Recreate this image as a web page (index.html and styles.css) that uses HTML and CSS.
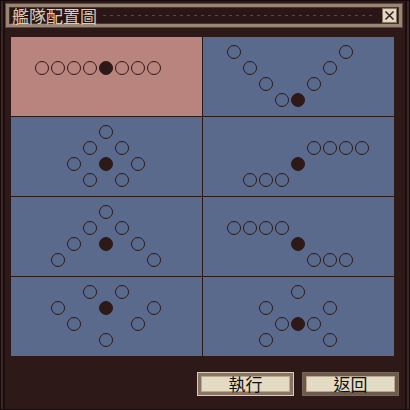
FILE: index.html
```html
<!DOCTYPE html>
<html lang="zh-Hant">
<head>
    <meta charset="UTF-8">
    <meta name="viewport" content="width=device-width, initial-scale=1.0">
    <title>艦隊配置圖</title>
    <link rel="stylesheet" href="styles.css">
</head>
<body>
    <div class="window">
        <div class="title-bar">
            <span class="title">艦隊配置圖</span>
            <span class="title-line"></span>
            <button class="close-btn">
                <svg width="13" height="13" viewBox="0 0 13 13">
                    <path d="M2.5 2.5 L10.5 10.5 M10.5 2.5 L2.5 10.5" stroke="#3a2420" stroke-width="1.6" fill="none"/>
                </svg>
            </button>
        </div>

        <div class="board" id="board">
            <!-- Formation cells are generated below -->
        </div>

        <div class="actions">
            <button class="btn btn-ok">執行</button>
            <button class="btn btn-back">返回</button>
        </div>
    </div>

    <script>
        // Each formation: flagship [col,row] and escort positions on a 9x4 grid
        const formations = [
            { flag: [4, 1], ships: [[0,1],[1,1],[2,1],[3,1],[5,1],[6,1],[7,1]] },
            { flag: [4, 3], ships: [[0,0],[1,1],[2,2],[3,3],[5,2],[6,1],[7,0]] },
            { flag: [4, 2], ships: [[4,0],[3,1],[5,1],[2,2],[6,2],[3,3],[5,3]] },
            { flag: [4, 2], ships: [[5,1],[6,1],[7,1],[8,1],[1,3],[2,3],[3,3]] },
            { flag: [4, 2], ships: [[4,0],[3,1],[5,1],[2,2],[6,2],[1,3],[7,3]] },
            { flag: [4, 2], ships: [[0,1],[1,1],[2,1],[3,1],[5,3],[6,3],[7,3]] },
            { flag: [4, 1], ships: [[3,0],[5,0],[1,1],[7,1],[2,2],[6,2],[4,3]] },
            { flag: [4, 2], ships: [[4,0],[2,1],[6,1],[3,2],[5,2],[2,3],[6,3]] }
        ];

        function dot(pos, filled) {
            return `<span class="dot${filled ? ' flagship' : ''}" style="grid-column:${pos[0] + 1};grid-row:${pos[1] + 1}"></span>`;
        }

        function renderBoard() {
            const board = document.getElementById('board');
            let html = '';
            formations.forEach((f, i) => {
                let dots = f.ships.map(p => dot(p, false)).join('');
                dots += dot(f.flag, true);
                html += `<div class="cell${i === 0 ? ' selected' : ''}"><div class="dots">${dots}</div></div>`;
            });
            board.innerHTML = html;
        }

        renderBoard();
    </script>
</body>
</html>
```

FILE: styles.css
```css
* {
    margin: 0;
    padding: 0;
    box-sizing: border-box;
}

body {
    background-color: #2e1919;
    font-family: "Noto Sans CJK TC", "Noto Sans CJK SC", sans-serif;
}

.window {
    width: 410px;
    height: 410px;
    background-color: #2e1919;
    border: 1px solid #170b0b;
    box-shadow: inset 2px 0 0 #3d2626, inset 4px 0 0 #1c0e0e, inset -2px 0 0 #3d2626, inset -4px 0 0 #1c0e0e;
    padding-top: 3px;
}

.title-bar {
    display: flex;
    align-items: center;
    height: 23px;
    margin: 0 7px 0 5px;
    padding: 0 2px 0 3px;
    border: 3px solid #9a8674;
    box-shadow: inset 0 0 0 1px #4a3630, 0 0 0 1px #5b463c;
    background-color: #2a1616;
}

.title {
    color: #ddcbb6;
    font-size: 17px;
    line-height: 17px;
}

.title-line {
    flex: 1;
    height: 1px;
    margin: 0 6px;
    background: repeating-linear-gradient(90deg, #5c4844 0 3px, transparent 3px 7px);
}

.close-btn {
    display: flex;
    align-items: center;
    justify-content: center;
    width: 15px;
    height: 15px;
    background-color: #e2d8c4;
    border: 1px solid #8a7664;
    cursor: pointer;
}

.board {
    display: grid;
    grid-template-columns: 191px 191px;
    grid-template-rows: repeat(4, 79px);
    gap: 1px;
    width: 383px;
    margin: 10px 0 0 10px;
    background-color: #2e1919;
}

.cell {
    background-color: #5a6a8c;
    padding: 7px 0 0 23px;
}

.cell.selected {
    background-color: #b8847d;
}

.dots {
    display: grid;
    grid-template-columns: repeat(9, 16px);
    grid-template-rows: repeat(4, 16px);
}

.dot {
    width: 14px;
    height: 14px;
    margin: 1px;
    border: 1px solid #2e1919;
    border-radius: 50%;
}

.dot.flagship {
    background-color: #2e1919;
}

.actions {
    display: flex;
    justify-content: flex-end;
    gap: 10px;
    margin: 17px 11px 0 0;
}

.btn {
    width: 95px;
    height: 22px;
    background-color: #e3dbc3;
    border: 3px solid #8a7462;
    outline: 1px solid #d8ccb8;
    box-shadow: inset 0 0 0 1px #b8a890;
    color: #111;
    font-family: "Noto Sans CJK TC", sans-serif;
    font-size: 17px;
    line-height: 16px;
    cursor: pointer;
}

.btn-back {
    outline-color: #7a6656;
    border-color: #6e5a4c;
}
```
